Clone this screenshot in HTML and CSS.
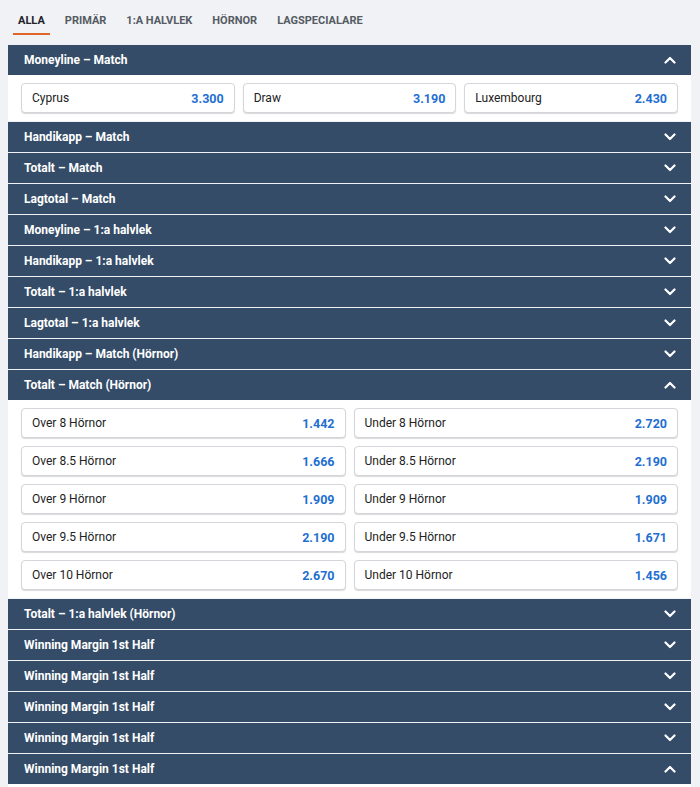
FILE: index.html
```html
<!DOCTYPE html>
<html lang="sv">
<head>
    <meta charset="UTF-8">
    <meta name="viewport" content="width=device-width, initial-scale=1.0">
    <title>Cyprus - Luxembourg</title>
    <link rel="stylesheet" href="styles.css">
</head>
<body>
    <!-- Category tabs -->
    <nav class="tabs">
        <a class="tab active">ALLA</a>
        <a class="tab">PRIMÄR</a>
        <a class="tab">1:A HALVLEK</a>
        <a class="tab">HÖRNOR</a>
        <a class="tab">LAGSPECIALARE</a>
    </nav>

    <div class="markets">
        <section class="market open">
            <div class="market-head">
                <span>Moneyline – Match</span>
                <svg class="chev" viewBox="0 0 12 8"><path d="M1.5 6.5 L6 2 L10.5 6.5"/></svg>
            </div>
            <div class="odds cols-3">
                <button class="odd"><span>Cyprus</span><b>3.300</b></button>
                <button class="odd"><span>Draw</span><b>3.190</b></button>
                <button class="odd"><span>Luxembourg</span><b>2.430</b></button>
            </div>
        </section>

        <section class="market">
            <div class="market-head"><span>Handikapp – Match</span><svg class="chev" viewBox="0 0 12 8"><path d="M1.5 1.5 L6 6 L10.5 1.5"/></svg></div>
        </section>
        <section class="market">
            <div class="market-head"><span>Totalt – Match</span><svg class="chev" viewBox="0 0 12 8"><path d="M1.5 1.5 L6 6 L10.5 1.5"/></svg></div>
        </section>
        <section class="market">
            <div class="market-head"><span>Lagtotal – Match</span><svg class="chev" viewBox="0 0 12 8"><path d="M1.5 1.5 L6 6 L10.5 1.5"/></svg></div>
        </section>
        <section class="market">
            <div class="market-head"><span>Moneyline – 1:a halvlek</span><svg class="chev" viewBox="0 0 12 8"><path d="M1.5 1.5 L6 6 L10.5 1.5"/></svg></div>
        </section>
        <section class="market">
            <div class="market-head"><span>Handikapp – 1:a halvlek</span><svg class="chev" viewBox="0 0 12 8"><path d="M1.5 1.5 L6 6 L10.5 1.5"/></svg></div>
        </section>
        <section class="market">
            <div class="market-head"><span>Totalt – 1:a halvlek</span><svg class="chev" viewBox="0 0 12 8"><path d="M1.5 1.5 L6 6 L10.5 1.5"/></svg></div>
        </section>
        <section class="market">
            <div class="market-head"><span>Lagtotal – 1:a halvlek</span><svg class="chev" viewBox="0 0 12 8"><path d="M1.5 1.5 L6 6 L10.5 1.5"/></svg></div>
        </section>
        <section class="market">
            <div class="market-head"><span>Handikapp – Match (Hörnor)</span><svg class="chev" viewBox="0 0 12 8"><path d="M1.5 1.5 L6 6 L10.5 1.5"/></svg></div>
        </section>

        <section class="market open">
            <div class="market-head">
                <span>Totalt – Match (Hörnor)</span>
                <svg class="chev" viewBox="0 0 12 8"><path d="M1.5 6.5 L6 2 L10.5 6.5"/></svg>
            </div>
            <div class="odds cols-2">
                <button class="odd"><span>Over 8 Hörnor</span><b>1.442</b></button>
                <button class="odd"><span>Under 8 Hörnor</span><b>2.720</b></button>
                <button class="odd"><span>Over 8.5 Hörnor</span><b>1.666</b></button>
                <button class="odd"><span>Under 8.5 Hörnor</span><b>2.190</b></button>
                <button class="odd"><span>Over 9 Hörnor</span><b>1.909</b></button>
                <button class="odd"><span>Under 9 Hörnor</span><b>1.909</b></button>
                <button class="odd"><span>Over 9.5 Hörnor</span><b>2.190</b></button>
                <button class="odd"><span>Under 9.5 Hörnor</span><b>1.671</b></button>
                <button class="odd"><span>Over 10 Hörnor</span><b>2.670</b></button>
                <button class="odd"><span>Under 10 Hörnor</span><b>1.456</b></button>
            </div>
        </section>

        <section class="market">
            <div class="market-head"><span>Totalt – 1:a halvlek (Hörnor)</span><svg class="chev" viewBox="0 0 12 8"><path d="M1.5 1.5 L6 6 L10.5 1.5"/></svg></div>
        </section>
        <section class="market">
            <div class="market-head"><span>Winning Margin 1st Half</span><svg class="chev" viewBox="0 0 12 8"><path d="M1.5 1.5 L6 6 L10.5 1.5"/></svg></div>
        </section>
        <section class="market">
            <div class="market-head"><span>Winning Margin 1st Half</span><svg class="chev" viewBox="0 0 12 8"><path d="M1.5 1.5 L6 6 L10.5 1.5"/></svg></div>
        </section>
        <section class="market">
            <div class="market-head"><span>Winning Margin 1st Half</span><svg class="chev" viewBox="0 0 12 8"><path d="M1.5 1.5 L6 6 L10.5 1.5"/></svg></div>
        </section>
        <section class="market">
            <div class="market-head"><span>Winning Margin 1st Half</span><svg class="chev" viewBox="0 0 12 8"><path d="M1.5 1.5 L6 6 L10.5 1.5"/></svg></div>
        </section>
        <section class="market open">
            <div class="market-head"><span>Winning Margin 1st Half</span><svg class="chev" viewBox="0 0 12 8"><path d="M1.5 6.5 L6 2 L10.5 6.5"/></svg></div>
            <div class="odds empty"></div>
        </section>
    </div>
</body>
</html>
```

FILE: styles.css
```css
/* Global Styles */
body {
    font-family: Roboto, "Liberation Sans", sans-serif;
    background-color: #f0f2f5;
    color: #222;
    margin: 0;
    padding: 0 9px 0 8px;
}

/* Tabs */
.tabs {
    display: flex;
    gap: 20px;
    height: 45px;
    padding-left: 10px;
}

.tab {
    font-size: 11px;
    font-weight: 700;
    color: #555b63;
    padding-top: 14px;
    position: relative;
}

.tab.active {
    color: #1f2329;
}

.tab.active::after {
    content: '';
    position: absolute;
    left: -5px;
    right: -5px;
    top: 33px;
    height: 2px;
    background-color: #e0662a;
}

/* Markets */
.markets {
    display: flex;
    flex-direction: column;
    gap: 1px;
}

.market-head {
    display: flex;
    align-items: center;
    justify-content: space-between;
    height: 30px;
    padding: 0 16px;
    background-color: #344c68;
    color: #fff;
    font-size: 12px;
    font-weight: 700;
}

.chev {
    width: 12px;
    height: 8px;
    margin-right: -1px;
    fill: none;
    stroke: #fff;
    stroke-width: 2.2;
    stroke-linecap: round;
    stroke-linejoin: round;
}

.odds {
    display: grid;
    gap: 8px;
    padding: 8px 13px 8px 13px;
    background-color: #fff;
}

.odds.empty {
    height: 30px;
}

.cols-3 {
    grid-template-columns: repeat(3, 1fr);
}

.cols-2 {
    grid-template-columns: repeat(2, 1fr);
}

.odd {
    display: flex;
    align-items: center;
    justify-content: space-between;
    height: 30px;
    padding: 0 10px 0 10px;
    background-color: #fff;
    border: 1px solid #d3d6da;
    border-radius: 4px;
    box-shadow: 0 1px 1px rgba(0, 0, 0, 0.15);
    font-family: inherit;
    font-size: 12px;
    color: #222;
}

.odd b {
    color: #1f6fd1;
    font-weight: 700;
    font-size: 12.5px;
}
```
